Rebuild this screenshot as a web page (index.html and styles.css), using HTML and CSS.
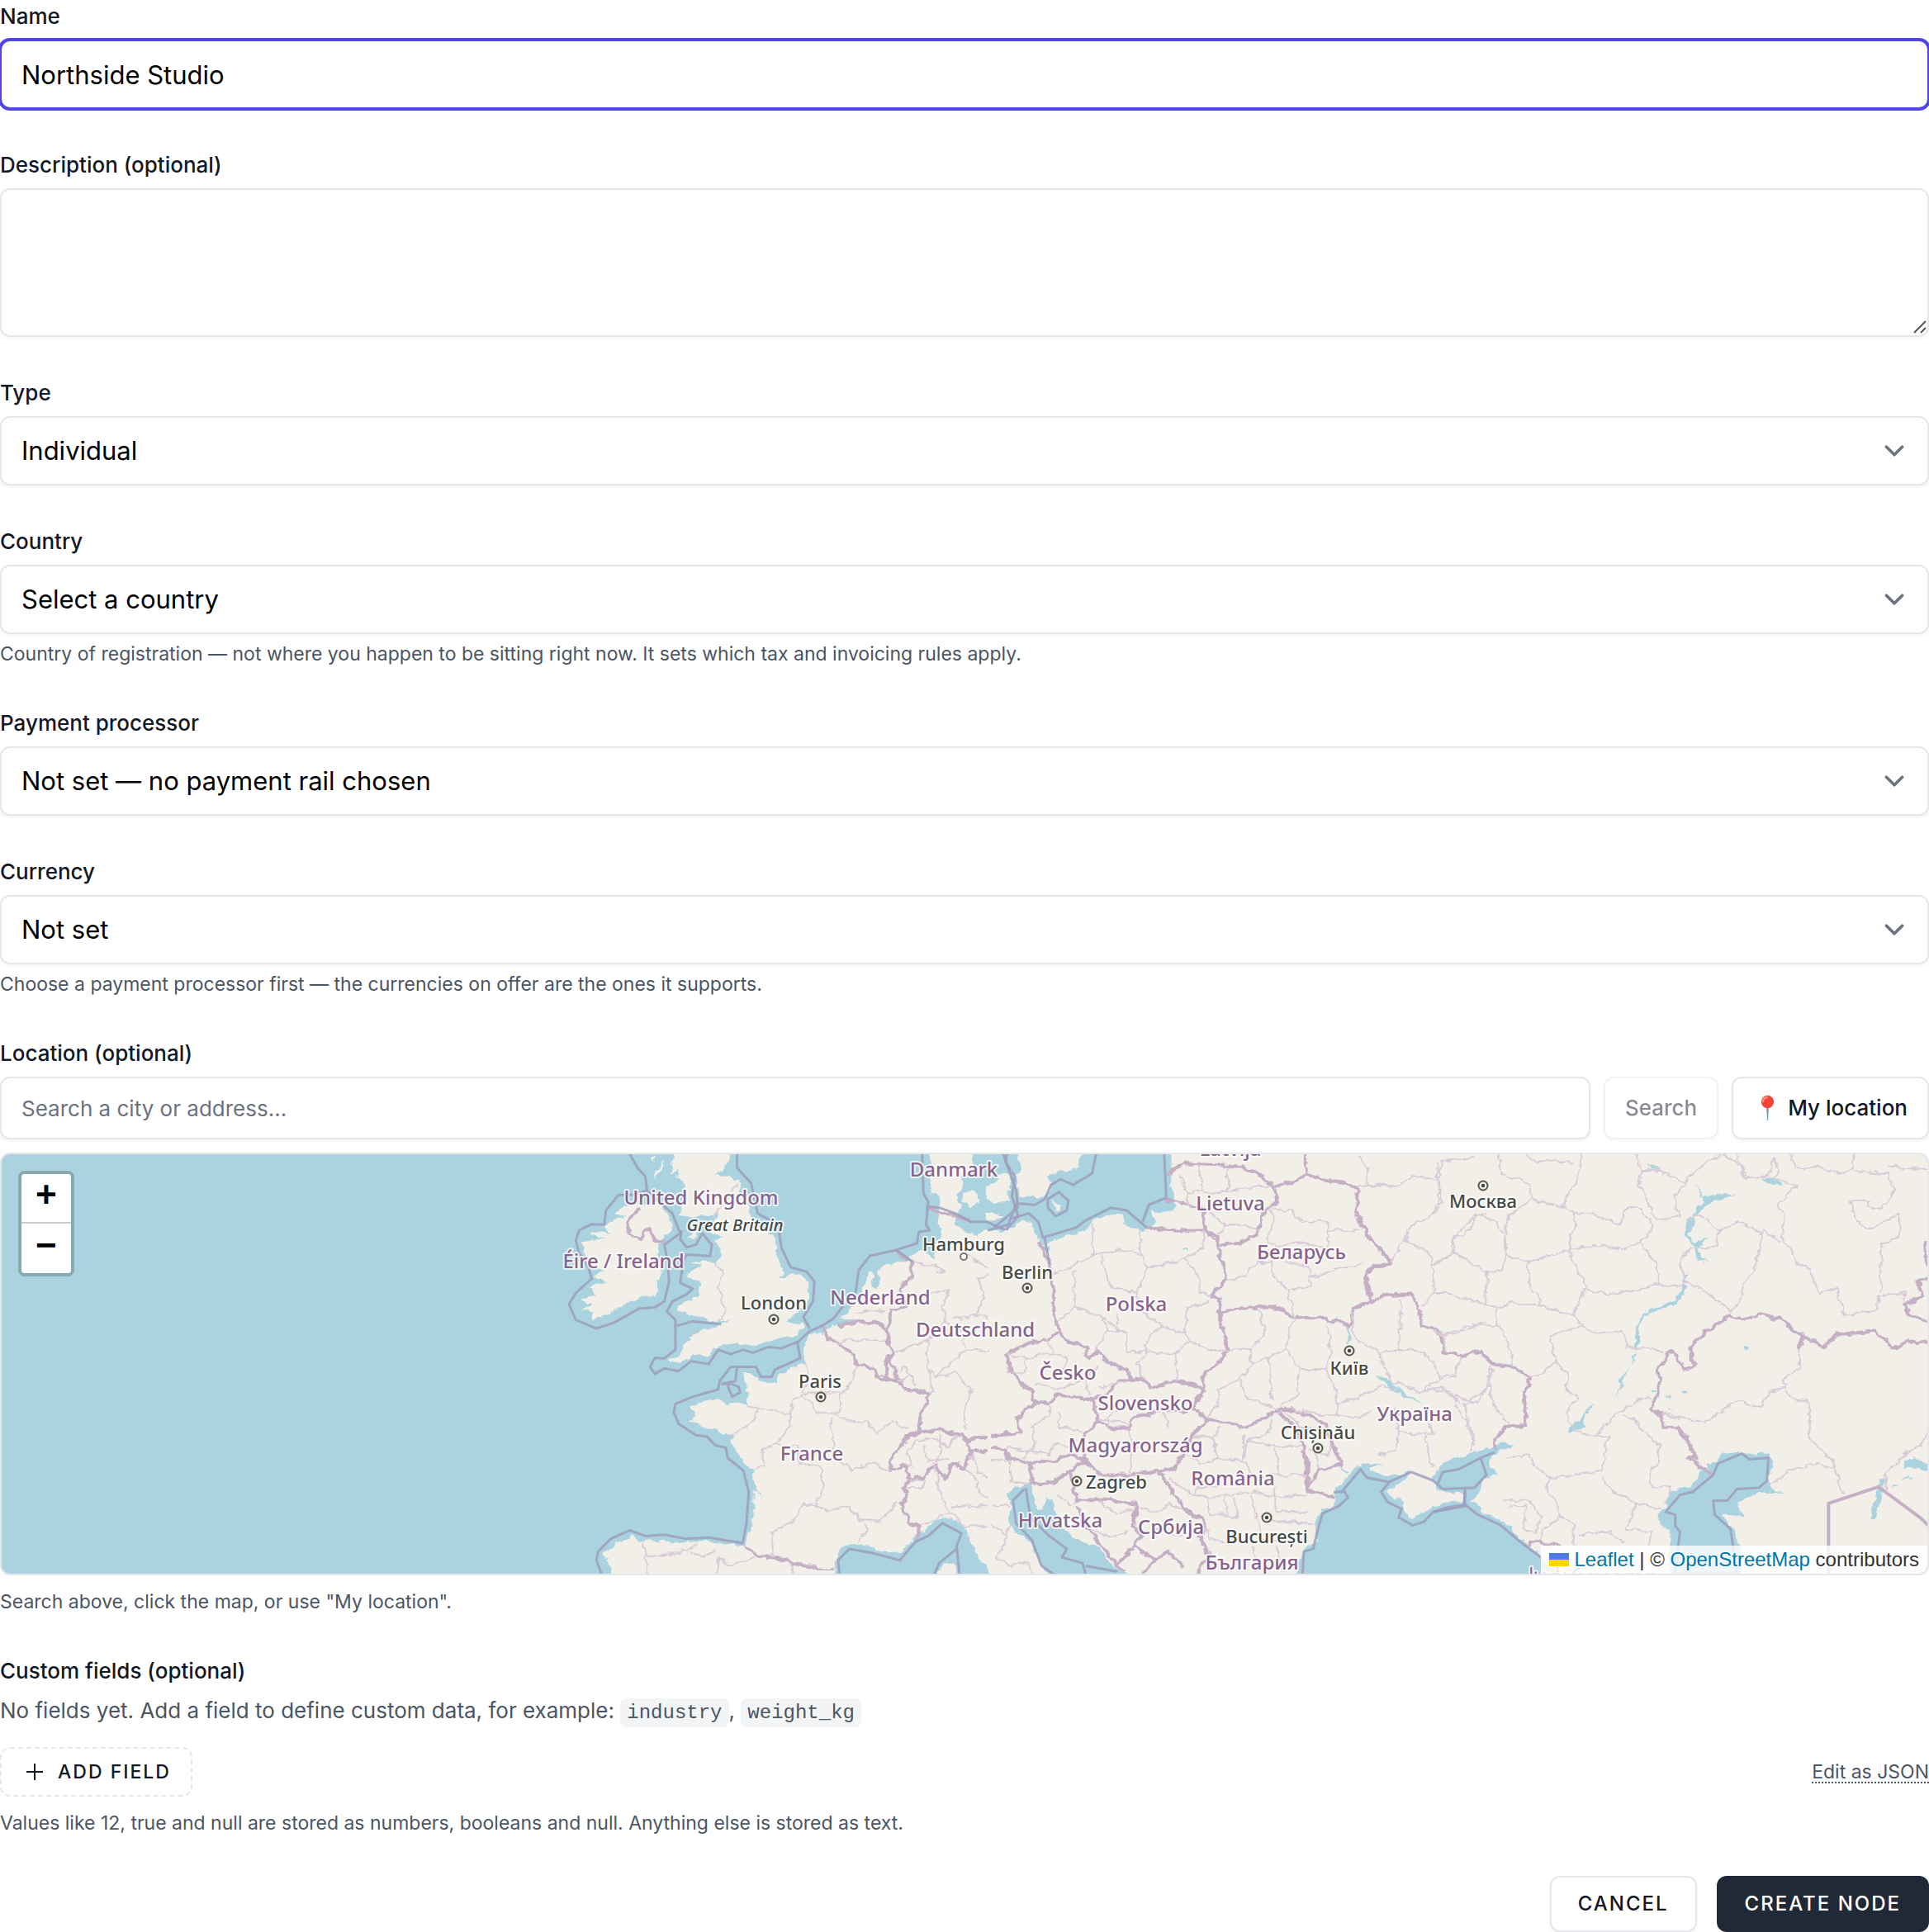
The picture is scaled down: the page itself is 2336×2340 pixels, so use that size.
FILE: index.html
```html
<!DOCTYPE html>
<html lang="en">
<head>
<meta charset="utf-8">
<meta name="viewport" content="width=device-width, initial-scale=1">
<title>Create node</title>
<link rel="stylesheet" href="styles.css">
</head>
<body>
<form class="form">
  <div class="field">
    <label class="label" for="name">Name</label>
    <input class="control is-focused" id="name" type="text" value="Northside Studio">
  </div>

  <div class="field">
    <label class="label" for="description">Description (optional)</label>
    <div class="area-wrap">
      <textarea class="control area" id="description" rows="3"></textarea>
      <svg class="grip" viewBox="0 0 16 16" aria-hidden="true"><path d="M1 15L15 1M9 15l6-6"/></svg>
    </div>
  </div>

  <div class="field">
    <label class="label" for="type">Type</label>
    <select class="control select" id="type"><option>Individual</option></select>
  </div>

  <div class="field">
    <label class="label" for="country">Country</label>
    <select class="control select" id="country"><option>Select a country</option></select>
    <p class="help">Country of registration — not where you happen to be sitting right now. It sets which tax and invoicing rules apply.</p>
  </div>

  <div class="field">
    <label class="label" for="processor">Payment processor</label>
    <select class="control select" id="processor"><option>Not set — no payment rail chosen</option></select>
  </div>

  <div class="field">
    <label class="label" for="currency">Currency</label>
    <select class="control select" id="currency"><option>Not set</option></select>
    <p class="help">Choose a payment processor first — the currencies on offer are the ones it supports.</p>
  </div>

  <div class="field">
    <label class="label" for="location">Location (optional)</label>
    <div class="search-row">
      <input class="control control-sm" id="location" type="text" placeholder="Search a city or address…">
      <button class="btn-plain" type="button" disabled>Search</button>
      <button class="btn-plain" type="button">
        <svg class="pin" viewBox="0 0 34 34" aria-hidden="true"><path d="M16 14h3l-1 18h-1z" fill="#6a9fb0"/><circle cx="17.500" cy="9.500" r="7.700" fill="#f44336"/><path d="M12 9q0-4 5-5" fill="none" stroke="#ff8a73" stroke-width="2.400" stroke-linecap="round"/></svg>
        My location
      </button>
    </div>
    <div class="map">
      <svg class="map-art" viewBox="2 1398 2332 508" preserveAspectRatio="xMidYMid slice" role="img" aria-label="Map of Europe">
        <defs>
          <filter id="rough" x="0" y="0" width="100%" height="100%" color-interpolation-filters="sRGB">
            <feTurbulence type="fractalNoise" baseFrequency="0.035" numOctaves="3" seed="4"/>
            <feDisplacementMap in="SourceGraphic" scale="24" xChannelSelector="R" yChannelSelector="G"/>
          </filter>
          <g id="capital"><circle r="5.500" fill="#f2efe9" stroke="#55584c" stroke-width="2"/><circle r="2.200" fill="#444"/></g>
        </defs>
        <g>
          <!-- western Europe -->
          <g transform="translate(640 1380) scale(.38265 .34439)">
            <g class="land">
              <path d="M272 262L300 235 330 225 370 228 410 222 432 245 450 285 455 320 430 340 418 360 405 375 415 420 425 455 410 500 405 545 345 560 290 590 255 615 200 635 210 610 170 600 205 580 165 565 215 545 190 520 240 500 205 480 245 462 200 450 190 420 175 395 170 360 240 350 190 330 205 325 260 330 240 310 262 285 310 270Z"/>
              <path d="M465 20L650 20 640 52 625 90 590 125 640 128 670 155 665 190 690 230 705 270 712 290 735 315 770 330 785 380 790 420 800 445 805 470 795 490 830 478 865 480 885 500 890 530 885 560 870 590 840 610 820 640 870 645 868 668 845 690 800 700 770 710 710 725 660 715 625 725 600 730 580 740 570 765 530 755 510 770 480 790 445 780 480 750 500 720 520 690 550 665 600 658 640 632 600 645 570 640 540 620 500 615 470 600 475 585 520 565 540 550 545 500 505 485 510 470 545 440 515 435 530 430 590 430 605 420 605 380 590 360 615 340 580 335 580 300 600 262 560 265 510 275 480 270 490 200 495 150 470 140 478 100 450 130 455 90Z"/>
              <path d="M400 110L430 70 420 100 405 140ZM385 65l20-8 -10 20ZM500 350l40-35 -12 28Z"/>
              <path d="M1265 20L1270 90 1285 100 1270 150 1275 190 1300 200 1300 255 1300 290 1310 340 1290 370 1285 420 1265 400 1240 395 1205 405 1200 430 1130 435 1105 465 1115 490 1100 525 1085 520 1095 480 1075 460 1060 530 1040 570 1010 600 985 630 1030 635 1020 650 970 655 930 680 880 690 875 740 880 790 830 805 795 825 785 860 745 850 715 840 705 825 680 825 690 870 693 935 660 925 625 930 595 910 560 920 505 940 535 965 510 985 560 1015 600 1025 650 1045 640 1065 665 1100 680 1140 715 1160 710 1210 745 1275 715 1230 715 1300 700 1370 685 1435 640 1425 590 1420 540 1415 470 1420 390 1410 350 1410 325 1395 290 1415 235 1455 255 1490 275 1600 980 1600 970 1480 985 1440 1020 1418 1080 1430 1120 1448 1180 1452 1220 1400 1260 1370 1290 1335 1330 1330 1375 1355 1400 1410 1420 1470 1450 1500 1490 1600 1490 320 1440 320 1420 340 1380 320 1350 300 1360 260 1370 230 1355 200 1375 170 1370 130 1400 110 1415 20Z"/>
              <path d="M1375 185L1410 180 1425 215 1400 240 1375 215ZM1450 165L1480 150 1500 120 1525 125 1520 190 1515 220 1470 225 1450 200ZM1440 260L1500 265 1480 285 1445 285ZM1295 1600L1298 1515 1320 1495 1350 1490 1355 1600Z"/>
            </g>
            <g class="state">
              <path d="M930 655L945 700 980 715 1030 760 1040 795 1070 790 1100 830 1135 845 1170 850 1200 880 1270 893 1245 960 1235 1030"/>
              <path d="M980 655L1070 640 1120 655 1140 680 1135 705 1160 750 1140 770 1160 810 1170 850M1135 690L1140 640 1150 600 1195 590 1180 530 1210 480 1215 430 1165 395M1140 770L1128 820 1135 845"/>
              <path d="M1235 1030L1300 1020 1370 1040 1385 1060 1440 1045 1500 1030 1550 1030 1568 970M1235 1030L1205 1040 1145 1130 1145 1165 1190 1145 1205 1195 1250 1190 1290 1145 1320 1195 1340 1140 1385 1155 1400 1100 1385 1060M1205 1195L1190 1230 1195 1260 1180 1280 1205 1345 1240 1365 1230 1410M1400 1100L1480 1090 1568 1095"/>
              <path d="M685 1435L730 1465 800 1480 870 1495 920 1515 970 1515M1265 235L1300 260 1350 265 1400 290M350 245L310 295 320 330 350 350 375 315 400 350 430 365"/>
            </g>
            <g class="region">
              <path d="M660 155L620 235 580 270M590 430L620 475 600 520 610 560 625 605 600 645"/>
              <path d="M875 790L885 820 870 895 910 960 990 955 985 900 1000 885 1030 830 1035 795M870 895L835 925 830 965 720 945 695 935M720 945L715 985 690 1010 640 1045M830 965L825 1010 785 1075 735 1090 750 1150 715 1160M785 1075L855 1080 855 1140 925 1150 935 1210 910 1290 945 1310 1010 1290 1050 1340 1115 1340 1170 1275M955 975L965 1090 995 1140 1020 1165 1080 1135 1145 1165M965 960L1015 995 1070 990 1100 1030 1150 995 1205 1020M875 890L985 890M910 1290L870 1285 830 1350 775 1380 770 1470M1060 1350L1070 1370 1045 1415M980 715L1060 700 1130 710M1040 610L1130 600"/>
              <path d="M360 1410L375 1465 480 1455 540 1420M370 1465L380 1530M480 1440L560 1470 590 1440M600 1530L600 1470 640 1500 720 1470M830 1490L840 1530M1160 750L1240 715 1270 700 1320 640 1310 590 1330 530 1270 540M1215 430L1300 450 1320 465 1295 460M1380 400L1480 470 1425 490 1440 560 1415 620 1340 630M1510 470L1515 570 1568 600M1415 620L1500 640 1568 610M1320 640L1370 670 1385 740 1500 745M1165 850L1215 830 1225 870M1170 810L1195 800 1215 840M1260 710L1265 810 1285 880 1270 893M1265 800L1290 840 1350 815 1400 880 1380 960 1385 1020M1290 840L1320 800 1385 740M1235 1050L1200 1100 1215 1150 1190 1145M1235 1060L1280 1050 1330 1080 1350 1040M1250 1070L1260 1130 1330 1120M1300 1040L1310 1100 1280 1140M1205 1195L1255 1200 1245 1225 1195 1225M1290 1145L1300 1250 1335 1310M1385 1155L1420 1200 1430 1250 1510 1285 1340 1290M1335 1310L1240 1360M1335 1310L1380 1360 1500 1360 1510 1400 1568 1450M1400 1110L1420 1170 1470 1200 1510 1150M1510 1400L1480 1500"/>
            </g>
            <g class="sea">
              <path d="M310 30L345 100 370 130 375 180 330 195 285 195 245 250 240 300 200 298 160 320 150 355 160 400 190 450 200 490 150 540 128 580 150 635 215 665 270 645 350 595 400 590 430 570 445 500 440 430 430 370 480 330 455 260 375 180"/>
              <path d="M485 320L480 350 500 380 530 370 550 330 580 370 575 410 500 405 490 430 480 505 520 525 500 545 455 570 438 605 465 635 465 740 430 770 400 768 385 800 400 825 430 805 475 815 515 780 570 790 600 740 640 755 680 740 710 750 760 730 800 735 855 710 890 675 930 655 965 630 1000 580M660 30L660 100 705 155 725 260 790 300 800 380 830 450 880 465 905 500 900 570 870 625 890 665"/>
              <path d="M850 710L860 770 780 810 770 835 735 835 720 800 640 800 605 850 600 880 520 905 465 930 460 960 475 1000 530 1040 565 1045 590 1075 625 1085 630 1120 680 1165 697 1240 690 1350 678 1420 570 1400 500 1405 430 1390 370 1395 320 1375 260 1405 220 1450 215 1480 235 1540M660 800L655 850 610 860M610 860L640 860 665 870 670 890 645 905 635 880 630 860"/>
              <path d="M1245 30L1250 190 1265 220 1258 300 1270 320 1235 325 1230 365 1160 390 1080 410 1045 460 1035 540M1258 235L1300 240 1350 260 1400 290 1450 290 1510 320 1550 270 1530 200 1540 130 1510 80 1515 40M1165 390L1215 430M470 655L520 640 610 650M985 1540L980 1480 1015 1440 1090 1455 1175 1480 1225 1415 1265 1395 1310 1350 1370 1385 1355 1430 1365 1540M1280 1540L1300 1490 1355 1440"/>
            </g>
          </g>
          <!-- central and eastern Europe -->
          <g transform="translate(1200 1380) scale(.38265 .34439)">
            <g class="land">
              <path d="M-10 325L50 320 90 290 130 290 140 330 165 375 190 360 240 340 300 320 330 280 410 265 430 300 480 325 525 290 505 255 580 255 582 215 570 160 572 -20 3050 -20 3050 1620 -10 1620Z"/>
              <path d="M80 20L95 110 80 140 90 200 150 205 180 195 190 160 185 130 215 110 270 105 285 60 310 20ZM192 212l28 22 -14 18ZM30 135l35-20 -5 60 -30 5Z"/>
            </g>
            <g class="water">
              <path d="M970 1620L972 1480 1000 1430 1030 1410 1025 1345 1045 1305 1085 1300 1090 1230 1130 1190 1155 1145 1240 1140 1190 1160 1235 1180 1290 1185 1320 1165 1310 1195 1280 1215 1250 1240 1300 1270 1310 1310 1335 1335 1370 1310 1400 1290 1450 1275 1540 1280 1550 1310 1610 1335 1650 1375 1700 1430 1740 1470 1830 1560 1860 1620Z"/>
              <path d="M1395 1190L1420 1150 1440 1130 1510 1110 1568 1085 1640 1065 1655 1080 1600 1100 1585 1120 1575 1150 1610 1180 1560 1190 1550 1230 1510 1290 1495 1280 1495 1245 1420 1235Z"/>
              <path d="M50 1250L80 1220 130 1215 135 1280 150 1305 165 1300 175 1255 200 1280 205 1340 260 1405 340 1435 370 1480 440 1540 440 1620 190 1620 180 1530 150 1480 130 1420 90 1390 55 1350 65 1290Z"/>
              <path d="M1128 660l8 0 0 60 -8 0ZM1215 830L1270 850 1300 885 1370 930 1290 895ZM150 375l38 0 0 25ZM605 383h16v6h-16ZM1100 1140l35 30 -8 8Z"/>
            </g>
            <g class="state">
              <path d="M150 360L185 440 195 520 200 600 215 680 180 700M215 680L245 710 300 730 310 770 340 745 370 780 430 810 445 845M180 700L110 720 50 755 65 820 130 890 140 930 185 930 215 895 270 910 325 915 385 885 400 850 445 845 475 835 510 870 590 850 640 860 675 885 670 835 750 745 720 600 725 560 695 550 745 495 715 340 680 320 600 322 495 312"/>
              <path d="M325 915L340 990 380 1015 440 1015 450 980 540 955 640 950 685 985M675 885L650 920 640 950M140 930L120 940 80 985 95 1030 0 1040M340 990L300 1030 290 1090 300 1130 345 1180 440 1180 530 1165 580 1160 620 1080 640 1040 685 985 740 990 805 1015 880 970 910 950 960 950 1060 1000 1075 1060 1110 1145 1040 1160 1000 1235M0 1085L45 1090 60 1125 120 1135 200 1130 250 1105 300 1130M910 960L960 1010 990 1080 1000 1150 1000 1235 1050 1245 1085 1260"/>
              <path d="M530 1165L590 1260 620 1310 665 1330 680 1360 660 1400 690 1460 650 1530M120 1135L130 1190 125 1215 200 1205 250 1165 260 1220 270 1270 340 1265 460 1280 450 1360 480 1390 450 1430 520 1480 560 1450 610 1500M270 1290L300 1360 380 1470 420 1520M450 1430L400 1500M520 1480L480 1530M300 1130L250 1165"/>
              <path d="M555 125L610 85 700 90 800 95 860 130 900 170 905 220 860 260 845 330 790 365 720 370 680 320 670 270 680 245 555 210M900 165L960 150 1000 120 1060 145 1120 150 1160 175 1155 260 1200 350 1265 430 1185 465 1205 570 1150 590 1135 655 1060 630 960 625 900 590 770 595 725 615M985 20L1000 120M1205 575L1250 545 1330 545 1360 600 1360 655 1420 670 1435 750 1500 760 1550 745 1590 790 1650 800 1710 835 1685 900 1695 960 1690 1005 1630 1010 1595 1050 1595 1095"/>
            </g>
            <g class="region">
              <path d="M320 300L325 405 240 460 190 470M325 405L360 400 400 390 470 400 495 455 465 540 380 520 350 430 360 400M495 455L610 420 675 380 670 320M470 320L475 400M610 420L660 490 660 540 695 550M265 460L265 590 215 640M265 590L350 620 370 670 330 745M370 670L430 680 430 750 490 740 500 690 540 655 470 600 465 540M540 655L615 680 620 590 695 570M615 680L630 710 690 740 750 745M500 690L490 750 465 790 480 840M580 755L595 850M350 620L400 670 400 610M430 680L400 670M630 710L580 755 490 750"/>
              <path d="M55 755L110 770 110 820 65 820M110 770L200 750 240 770 230 820 300 840 340 790M200 750L180 700M140 860L220 880 300 840M300 840L310 900M340 870L430 850M370 1010L380 960 440 930M540 955L560 1010M190 930L185 970 130 1010M215 960L215 1010 290 1030M130 1010L140 1080 100 1120M440 1015L450 1100 440 1180M45 1080L190 1110 200 1070 290 1090M340 980L440 1000"/>
              <path d="M660 90L665 180 620 190 630 240M750 100L750 180 700 190 665 180M750 180L820 170 890 160M600 130L620 190M690 250L740 300 720 330M740 300L800 300 850 320M880 240L900 290 870 350 900 380 960 360 1010 370 1065 385 1070 290 980 290 950 250 880 245M1070 320L1170 320M750 500L800 480 840 430 890 430 890 480 940 530 1010 520 1010 450 930 430M1010 490L1110 450 1180 440M940 530L960 625M1165 60L1195 100 1190 160 1280 165 1340 130 1410 140 1430 80 1530 60M1160 165L1280 165M1415 140L1425 230 1380 280 1330 300 1310 350 1265 430M1310 350L1380 400 1400 440 1470 400 1460 350 1530 270 1568 260M1400 440L1400 540 1370 590M1400 540L1440 540 1568 580M1430 690L1500 670 1568 640"/>
              <path d="M845 595L870 680 820 740 780 730 750 745M820 740L825 790 880 765 890 920M825 790L790 840 720 880 720 930 685 980M790 840L810 910 880 940 910 950M880 765L935 740 975 800 970 900 915 940M935 740L945 660 965 630M975 810L1060 810 1075 770 1065 650M1060 810L1090 880 1095 970 1060 970 960 950M1095 930L1180 900 1230 870 1290 880M1140 600L1150 700 1230 750 1290 740 1300 560M1230 750L1240 800 1270 850 1360 890 1420 840 1400 780 1360 745 1290 740M1360 890L1420 870 1460 900 1470 940M1095 970L1160 980 1200 960M1280 940L1290 1030 1360 1035 1400 1035 1380 980M1290 1030L1280 1100 1225 1110M1370 1040L1400 1150M1470 940L1510 1000 1530 1080M1490 760L1470 830 1420 840M1580 800L1568 880 1540 930 1470 900"/>
              <path d="M640 1050L700 1050 730 1010M700 1050L720 1120 660 1140 620 1110M720 1120L800 1130 800 1040M800 1130L810 1060 880 1030 890 980M810 1060L900 1080 980 1080M900 1080L910 1180 830 1190 800 1130M910 1180L1000 1180M640 1250L690 1260 690 1320 750 1320 740 1250 690 1260M750 1320L780 1330 770 1260M820 1250L840 1330 860 1410M900 1220L900 1310 1000 1310M870 1340L1020 1350M560 1190L640 1250 660 1220 720 1220M680 1360L690 1400 740 1420 860 1410 980 1410M740 1250L830 1240 900 1260 1000 1250M690 1450L700 1520M830 1430L840 1520M900 1430L930 1520M0 1130L60 1130 60 1200 120 1215M0 1290L60 1290M0 1350L50 1390 60 1350M50 1390L20 1470 60 1500 110 1480 130 1530M340 1265L400 1320 450 1300M300 1360L380 1400 440 1380M210 1250L250 1290 270 1270M520 1370L620 1400 650 1360M470 1300L530 1310 560 1280 600 1300M1010 1090L1060 1110 1080 1080M1020 1060L1040 1160M930 960L980 1010 1060 1020"/>
            </g>
            <g class="sea">
              <path d="M335 40L320 120 260 160 220 140 190 160 170 210 140 230 80 225 55 300 -10 320M35 40L80 180 85 240 10 310M60 280L120 260 150 290 165 345 270 310 300 285 380 240 430 250 495 312M170 345L185 440M548 40L555 205 500 230 480 290M180 210L215 185 245 215 240 250 205 270 180 240Z"/>
              <path d="M985 1560L990 1450 1020 1440 1040 1350 1050 1315 1100 1290 1130 1260 1120 1240 1085 1240M1110 1240L1170 1160 1190 1190 1260 1205 1330 1170 1400 1200 1430 1230 1530 1225 1568 1180 1550 1120 1480 1160 1430 1170 1415 1210M1265 1200L1235 1240 1255 1275 1300 1300 1290 1330 1335 1357 1370 1345 1400 1310 1500 1290 1500 1230M1550 1120L1595 1100"/>
              <path d="M105 1230L70 1270 80 1350 130 1410 160 1500 200 1530M110 1225L125 1330 180 1390 240 1440 225 1470 290 1490 300 1530M300 1500L400 1520"/>
            </g>
          </g>
          <!-- Volga, Caspian and the Kazakh steppe -->
          <g transform="translate(1736 1380) scale(.38265 .34439)">
            <g class="water">
              <path d="M705 1320L735 1300 750 1235 820 1215 850 1165 890 1130 920 1100 970 1095 1020 1110 1050 1100 1075 1130 1060 1200 1080 1235 1110 1245 1030 1240 960 1280 985 1325 910 1320 950 1370 970 1420 980 1620 760 1620 745 1470 750 1380 720 1350Z"/>
              <path d="M830 155L845 205 870 195 960 195 885 215 850 240 820 300 805 330 830 365 865 345 835 390 850 420 880 425 835 430 825 380 795 335 800 290 825 280 830 245 860 220Z"/>
              <path d="M800 455L800 520 770 575 680 610 650 650 655 710 640 740 600 850 580 910 595 840 640 760 640 700 645 640 680 600 765 565 790 510ZM510 925L480 970 475 1010 425 1035 430 1010 465 990 480 955ZM1490 1130l30-15 10 15 38 10 0 25 -40-10 -38 0ZM1410 1200l20-10 -5 40 -25 100 -18 5 10-60 15-40ZM985 725h12v14h-12ZM675 85l60 30 -50-10ZM1030 140l40-5 40 25 -50-5ZM740 945l30 8 -25 4ZM735 905h14v6h-14ZM785 885h18v6h-18ZM690 880h12v5h-12ZM1480 1190h35v5h-35ZM1455 1215h14v6h-14Z"/>
            </g>
            <g class="state">
              <path d="M690 950L715 870 710 800 735 770 750 740 795 810 825 795 810 730 860 680 935 620 985 635 1035 610 1100 635 1165 690 1160 735 1170 690 1230 730 1280 685 1400 675 1460 735 1500 710 1600 715M690 950L720 970 730 1015 785 1020 830 1115 805 1120 885 1180M1600 480L1535 500 1550 550 1490 585 1520 625 1600 650M1555 360L1560 440M300 1430L310 1410 400 1430"/>
            </g>
            <path class="straight" d="M1250 1560L1250 1280 1408 1222 1540 1330 1568 1360 1600 1400"/>
            <g class="region">
              <path d="M205 50L215 120 300 155 310 210 240 270 225 320 230 410 300 430 375 410 430 385 435 330 450 300 440 250 405 235 460 130 470 30M290 50L310 75 450 80M310 210L405 235M440 260L500 260 590 300 600 260 640 230 690 290 690 320 655 360 595 390 540 370 480 380 430 385M640 50L660 110 720 110 795 150 760 210 780 270 740 280 700 280 670 200 650 160 660 110M795 150L850 90 910 50 960 80 985 135 1060 130 1075 70 1100 110 1080 140 1150 160 1090 230 1110 270 1100 340 1150 430 1190 460 1220 540 1275 520 1300 620 1400 600 1410 550 1490 540 1490 585M960 50L985 135M1125 50L1150 100 1225 95 1280 120 1330 100 1330 50M1330 110L1440 120 1460 180 1420 240 1370 240 1380 215 1320 215 1325 270 1370 315 1480 265 1470 340 1420 370 1415 540M1440 95L1568 105"/>
              <path d="M10 80L20 210 0 260M130 265L200 290 220 330M135 265L115 320 60 350 60 400 0 440M60 400L170 465 215 460 230 410M170 465L165 580 200 590 200 650 240 720 250 800M300 430L300 510 340 560 335 590M205 590L250 575 350 590 445 620 470 660 380 680 370 710 385 780 350 820 310 835M445 620L460 570 485 520 430 410 430 385M485 530L550 545 650 530 700 510 760 520 800 500 780 430 810 385 895 375 905 320 850 265 800 290M655 360L700 430 715 510M800 500L880 550 940 605 975 560 985 500 1020 450 1040 330 970 290 905 320M1040 320L1100 360M470 660L500 680 600 670 610 730 690 735 730 750M385 780L425 820 420 880 460 910 425 950 425 990 470 1040 515 1045 560 980 600 950 660 910 690 910M515 1045L555 1040 530 1165 370 1190 320 1150 300 1110 230 1120M600 965L640 990 680 1045 715 1080 710 1140 680 1180 690 1225 750 1220 740 1290M530 1190L560 1230 640 1280 720 1300M370 1190L355 1220 390 1290 400 1330 345 1370 340 1410M640 1280L610 1370 690 1380 680 1430M400 1330L450 1350 440 1430M460 1390L560 1380 600 1420M220 1275L300 1265 340 1330 320 1390 285 1370 290 1290 240 1290M720 965L860 995 960 920 1035 940 1060 890 1110 875 1110 840 1160 800 1160 735M1110 875L1130 910 1185 920 1195 1060 1265 1135 1295 1255M1075 1210L1130 1160 1220 1140 1280 1170M1435 1240L1430 1180 1500 1100 1545 1075 1568 1020M0 670L30 690 130 650 200 655M30 690L40 745M185 795L175 870 100 930 110 1010 130 1050 120 1100M0 880L50 890 85 930M175 870L200 950 240 1005"/>
            </g>
            <g class="sea">
              <path d="M885 1180L900 1140 975 1105 1000 1125 1060 1120 1055 1200 1030 1225 960 1230 930 1270 885 1270 890 1320 940 1370 965 1560M885 1180L820 1240 780 1250 735 1310 765 1320 765 1360 780 1380 760 1560M0 1310L40 1295 100 1285 140 1320 210 1355 280 1420 340 1470M100 1240L95 1285"/>
            </g>
          </g>
        </g>
        <g class="country">
          <text x="1155" y="1425">Danmark</text><text x="849" y="1459">United Kingdom</text>
          <text x="755" y="1536">Éire / Ireland</text><text x="1066" y="1580">Nederland</text>
          <text x="1181" y="1619">Deutschland</text><text x="983" y="1769">France</text>
          <text x="1376" y="1588">Polska</text><text x="1293" y="1671">Česko</text>
          <text x="1387" y="1708">Slovensko</text><text x="1375" y="1759">Magyarország</text>
          <text x="1493" y="1799">România</text><text x="1284" y="1850">Hrvatska</text>
          <text x="1418" y="1858">Србија</text><text x="1516" y="1901">България</text>
          <text x="1490" y="1466">Lietuva</text><text x="1490" y="1400">Latvija</text>
          <text x="1576" y="1525">Беларусь</text><text x="1713" y="1721">Україна</text>
          <text x="1930" y="1918">საქართველო</text>
        </g>
        <g class="city">
          <text x="890" y="1491" class="island">Great Britain</text>
          <text x="1167" y="1515">Hamburg</text><text x="1244" y="1549">Berlin</text>
          <text x="937" y="1586">London</text><text x="993" y="1681">Paris</text>
          <text x="1352" y="1803">Zagreb</text><text x="1534" y="1869">București</text>
          <text x="1796" y="1463">Москва</text><text x="1634" y="1665">Київ</text>
          <text x="1596" y="1743">Chișinău</text>
        </g>
        <use href="#capital" x="1244" y="1560"/><use href="#capital" x="937" y="1598"/>
        <use href="#capital" x="994" y="1692"/><use href="#capital" x="1304" y="1794"/>
        <use href="#capital" x="1534" y="1838"/><use href="#capital" x="1796" y="1436"/>
        <use href="#capital" x="1634" y="1636"/><use href="#capital" x="1596" y="1754"/>
        <circle cx="1167" cy="1522" r="4" fill="#fff" stroke="#777" stroke-width="2"/>
      </svg>
      <div class="zoom">
        <button class="zoom-btn" type="button" aria-label="Zoom in">+</button>
        <button class="zoom-btn" type="button" aria-label="Zoom out">−</button>
      </div>
      <div class="credit">
        <svg class="flag" viewBox="0 0 24 16" aria-hidden="true"><path fill="#4c7be1" d="M0 0h24v8H0z"/><path fill="#ffd500" d="M0 8h24v8H0z"/></svg>
        <a href="#leaflet">Leaflet</a> | © <a href="#osm">OpenStreetMap</a> contributors
      </div>
    </div>
    <p class="help help-map">Search above, click the map, or use "My location".</p>
  </div>

  <fieldset class="field custom">
    <legend class="label">Custom fields (optional)</legend>
    <p class="note">No fields yet. Add a field to define custom data, for example: <code class="chip">industry</code>, <code class="chip">weight_kg</code></p>
    <div class="custom-row">
      <button class="btn btn-dashed" type="button">
        <svg class="plus" viewBox="0 0 24 24" aria-hidden="true"><path d="M12 2v20M2 12h20"/></svg>
        Add field
      </button>
      <a class="json-link" href="#json">Edit as JSON</a>
    </div>
    <p class="help help-values">Values like 12, true and null are stored as numbers, booleans and null. Anything else is stored as text.</p>
  </fieldset>

  <div class="actions">
    <button class="btn btn-outline" type="button">Cancel</button>
    <button class="btn btn-dark" type="submit">Create node</button>
  </div>
</form>
</body>
</html>
```
FILE: styles.css
```css
:root {
  --text-lg: 31px;
  --text-md: 26px;
  --text-sm: 23px;
  --ink: #111827;
  --muted: #4b5563;
  --line: #e5e7eb;
  --shadow: 0 2px 4px rgba(0, 0, 0, .05);
}

* { box-sizing: border-box; }

body {
  margin: 0;
  background: #fff;
  color: var(--ink);
  font-family: Inter, "Noto Sans", sans-serif;
  font-size: var(--text-md);
  line-height: 40px;
}

p { margin: 0; }

input, select, textarea, button { font: inherit; color: inherit; margin: 0; }

.form { display: flex; flex-direction: column; gap: 48px; }

.field {
  display: flex;
  flex-direction: column;
  gap: 8px;
  min-width: 0;
}

.label { font-weight: 500; line-height: 40px; padding: 0; }

.control {
  display: block;
  width: 100%;
  padding: 16px 24px;
  border: 2px solid var(--line);
  border-radius: 12px;
  background-color: #fff;
  box-shadow: var(--shadow);
  color: #000;
  font-size: var(--text-lg);
  line-height: 48px;
  outline: none;
}

input.control, .select { height: 84px; }

.control:focus, .control.is-focused {
  border-color: #4f46e5;
  box-shadow: 0 0 0 2px #4f46e5;
}

.area-wrap { position: relative; display: flex; }
.area { resize: none; }
.grip {
  position: absolute;
  right: 3px;
  bottom: 4px;
  width: 16px;
  height: 16px;
  fill: none;
  stroke: #555;
  stroke-width: 2;
}

.select {
  appearance: none;
  padding-right: 80px;
  background-image: url("data:image/svg+xml,%3Csvg xmlns='http://www.w3.org/2000/svg' fill='none' viewBox='0 0 20 20'%3E%3Cpath stroke='%236b7280' stroke-linecap='round' stroke-linejoin='round' stroke-width='1.5' d='M6 8l4 4 4-4'/%3E%3C/svg%3E");
  background-repeat: no-repeat;
  background-position: right 16px center;
  background-size: 48px 48px;
}

.help { color: var(--muted); font-size: var(--text-sm); line-height: 32px; }
.help-map { margin-top: 8px; }

.search-row { display: flex; gap: 16px; }
input.control-sm {
  flex: 1;
  min-width: 0;
  height: 76px;
  font-size: var(--text-md);
  line-height: 40px;
}
.control-sm::placeholder { color: #6b7280; opacity: 1; }

.btn-plain {
  display: flex;
  align-items: center;
  gap: 8px;
  padding: 16px 24px;
  border: 2px solid var(--line);
  border-radius: 12px;
  background: #fff;
  box-shadow: var(--shadow);
  font-weight: 500;
  line-height: 40px;
  white-space: nowrap;
}
.btn-plain:disabled { opacity: .5; }
.pin { width: 34px; height: 34px; }

.map {
  position: relative;
  height: 512px;
  margin-top: 8px;
  border: 2px solid var(--line);
  border-radius: 12px;
  overflow: hidden;
  background: #aad3df;
}
.map-art { display: block; width: 100%; height: 100%; }
.map-art path { vector-effect: non-scaling-stroke; stroke-linejoin: round; }
.land, .water, .state, .region { filter: url(#rough); }
.land path { fill: #f2efe9; }
.water path { fill: #aad3df; }
.state path, .straight { fill: none; stroke: #c5afc4; stroke-width: 4; }
.region path { fill: none; stroke: #dacbd8; stroke-width: 2; }
.sea path { fill: none; stroke: #9c9dbd; stroke-width: 3; stroke-opacity: .85; }
.map-art text {
  font-family: "Noto Sans", "DejaVu Sans", sans-serif;
  font-weight: 500;
  text-anchor: middle;
  paint-order: stroke;
  stroke: rgba(255, 255, 255, .75);
  stroke-width: 4px;
  stroke-linejoin: round;
}
.country text { font-size: 24px; fill: #86648a; }
.city text { font-size: 22px; fill: #444a48; }
.city .island { font-size: 20px; font-style: italic; }

.zoom {
  position: absolute;
  left: 20px;
  top: 20px;
  display: flex;
  flex-direction: column;
  border: 4px solid rgba(0, 0, 0, .2);
  border-radius: 8px;
  background-clip: padding-box;
}
.zoom-btn {
  width: 60px;
  height: 60px;
  padding: 0 0 2px;
  border: 0;
  border-radius: 0 0 4px 4px;
  background: #fff;
  color: #000;
  font: bold 44px/52px "Liberation Mono", monospace;
}
.zoom-btn:first-child { border-bottom: 2px solid #ccc; border-radius: 4px 4px 0 0; }

.credit {
  position: absolute;
  right: 0;
  bottom: 0;
  padding: 0 10px;
  background: rgba(255, 255, 255, .8);
  color: #333;
  font: 24px/34px "Liberation Sans", Arial, sans-serif;
}
.credit a { color: #0078a8; text-decoration: none; }
.flag { width: 24px; height: 16px; }

.custom { margin: 0; padding: 0; border: 0; }
.custom .label { margin-bottom: 8px; }
.note { color: var(--muted); }
.chip {
  padding: 4px 8px;
  border-radius: 8px;
  background: #f3f4f6;
  font: 24px "Liberation Mono", monospace;
}
.custom-row {
  display: flex;
  align-items: center;
  justify-content: space-between;
  margin-top: 16px;
}

.btn {
  display: inline-flex;
  align-items: center;
  border: 2px solid transparent;
  border-radius: 12px;
  padding: 16px 32px;
  font-size: 24px;
  font-weight: 500;
  line-height: 32px;
  letter-spacing: 2px;
  text-transform: uppercase;
}
.btn-dashed {
  gap: 16px;
  padding: 12px 24px 12px 28px;
  border: 2px dashed var(--line);
  background: #fff;
  font-size: var(--text-sm);
}
.plus { width: 24px; height: 24px; fill: none; stroke: currentColor; stroke-width: 2; }
.btn-outline { border-color: var(--line); background: #fff; box-shadow: var(--shadow); }
.btn-dark { background: #1f2937; color: #fff; }

.json-link {
  color: var(--muted);
  font-size: var(--text-sm);
  line-height: 32px;
  text-decoration: underline dotted 2px;
  text-underline-offset: 4px;
}
.help-values { margin-top: 8px; }

.actions { display: flex; justify-content: flex-end; gap: 24px; }
```
